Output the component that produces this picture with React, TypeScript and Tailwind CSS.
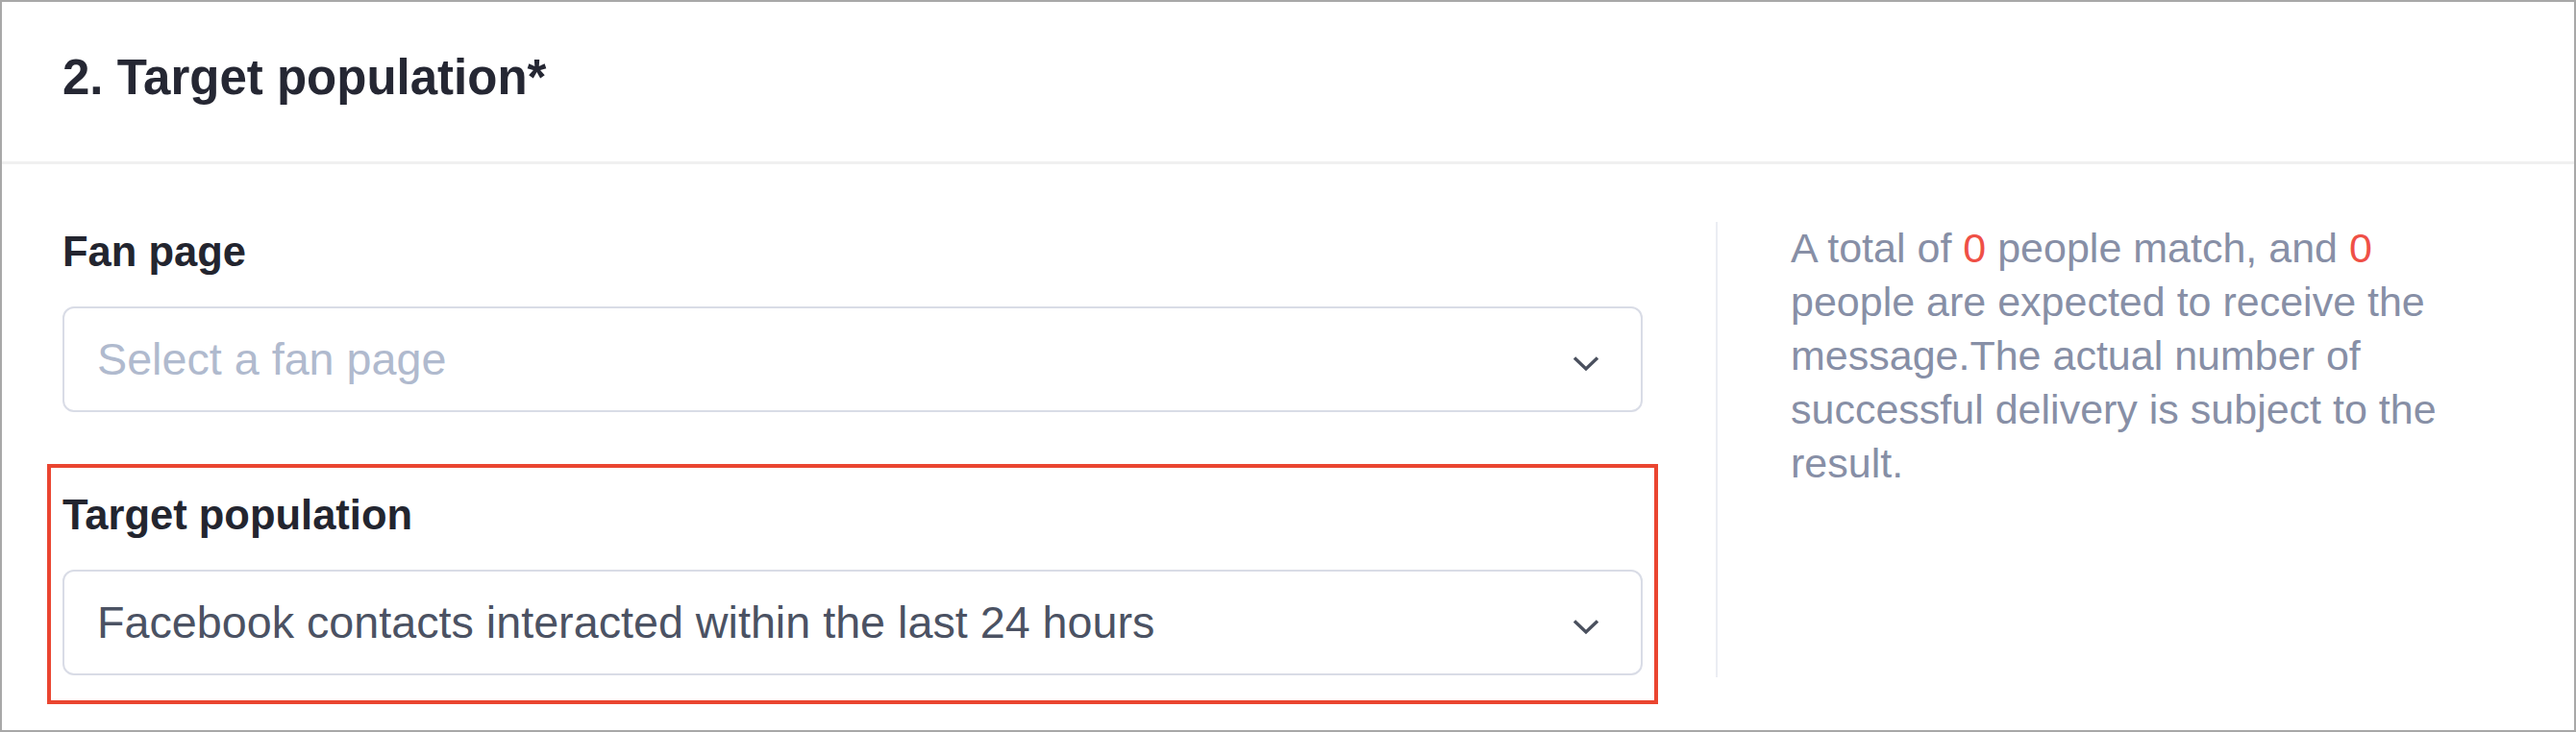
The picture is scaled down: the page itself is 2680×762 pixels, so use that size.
import React from "react";

const ChevronDown = () => (
  <svg width="28" height="17" viewBox="0 0 28 17" fill="none" className="mt-[9px] shrink-0">
    <path d="M2 2.5 L14 14 L26 2.5" stroke="#4a505e" strokeWidth="3.4" strokeLinecap="butt" strokeLinejoin="miter" />
  </svg>
);

type FieldProps = {
  label: string;
  value?: string;
  placeholder?: string;
  highlighted?: boolean;
};

const SelectField = ({ label, value, placeholder, highlighted }: FieldProps) => (
  <div
    className={`border-4 ${
      highlighted ? "border-[#ea4530]" : "border-transparent"
    } px-[12px] pt-[28px] pb-[26px]`}
  >
    <div className="text-[43.5px] leading-[43px] font-bold text-[#23252f] mb-[35px]">{label}</div>
    <button className="w-full h-[110px] border-2 border-[#d9dce6] rounded-[12px] bg-white flex items-center justify-between pl-[34px] pr-[43px] text-left">
      <span
        className={`text-[46.7px] leading-none ${value ? "text-[#4b5263]" : "text-[#b0bace]"}`}
      >
        {value ?? placeholder}
      </span>
      <ChevronDown />
    </button>
  </div>
);

export default function App() {
  return (
    <div
      className="w-[2680px] h-[762px] border-2 border-[#a8a8a8] bg-white flex flex-col"
      style={{ fontFamily: '"Liberation Sans", Arial, sans-serif' }}
    >
      <div className="h-[169px] shrink-0 border-b-[3px] border-[#f0f0f0] pl-[63px] pt-[53px]">
        <h2 className="text-[51px] leading-none font-bold text-[#252733]">2. Target population*</h2>
      </div>

      <div className="flex flex-1">
        <div className="w-[1783px] shrink-0 pl-[47px] pr-[60px] pt-[38px] flex flex-col gap-[24px]">
          <SelectField label="Fan page" placeholder="Select a fan page" />
          <SelectField
            label="Target population"
            value="Facebook contacts interacted within the last 24 hours"
            highlighted
          />
        </div>

        <div className="flex-1 self-start mt-[60px] h-[474px] border-l-2 border-[#ebedf3] pl-[76px]">
          <p className="w-[720px] text-[43px] leading-[56px] text-[#878fa6] -mt-[1px]">
            A total of <span className="text-[#ef5046]">0</span> people match, and{" "}
            <span className="text-[#ef5046]">0</span> people are expected to receive the
            message.The actual number of successful delivery is subject to the result.
          </p>
        </div>
      </div>
    </div>
  );
}
